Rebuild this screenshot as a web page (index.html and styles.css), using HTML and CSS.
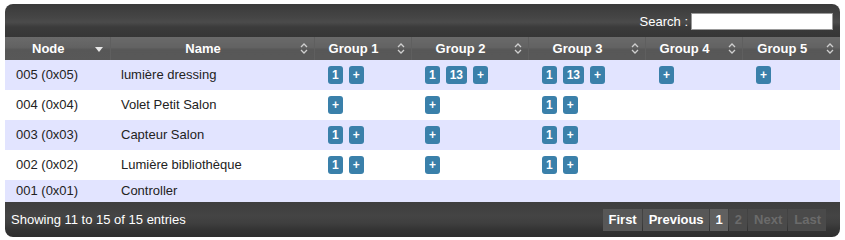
FILE: index.html
```html
<!DOCTYPE html>
<html lang="fr">
<head>
    <meta charset="UTF-8">
    <title>Nodes</title>
    <link rel="stylesheet" href="styles.css">
</head>
<body>

    <div class="table-wrapper">
        <div class="toolbar">
            <label class="search">Search :<input type="text"></label>
        </div>

        <table class="nodes">
            <colgroup>
                <col style="width:105px">
                <col style="width:204px">
                <col style="width:97px">
                <col style="width:117px">
                <col style="width:117px">
                <col style="width:97px">
                <col style="width:98px">
            </colgroup>
            <thead>
                <tr>
                    <th class="sort-desc">Node <span class="icon"><svg width="8" height="5" viewBox="0 0 8 5"><path d="M0 0h8L4 5z" fill="#e8e8e8"/></svg></span></th>
                    <th>Name <span class="icon"><svg width="8" height="11" viewBox="0 0 8 11"><path d="M1 4l3-3 3 3M1 7l3 3 3-3" fill="none" stroke="#cfcfcf" stroke-width="1.3"/></svg></span></th>
                    <th>Group 1 <span class="icon"><svg width="8" height="11" viewBox="0 0 8 11"><path d="M1 4l3-3 3 3M1 7l3 3 3-3" fill="none" stroke="#cfcfcf" stroke-width="1.3"/></svg></span></th>
                    <th>Group 2 <span class="icon"><svg width="8" height="11" viewBox="0 0 8 11"><path d="M1 4l3-3 3 3M1 7l3 3 3-3" fill="none" stroke="#cfcfcf" stroke-width="1.3"/></svg></span></th>
                    <th>Group 3 <span class="icon"><svg width="8" height="11" viewBox="0 0 8 11"><path d="M1 4l3-3 3 3M1 7l3 3 3-3" fill="none" stroke="#cfcfcf" stroke-width="1.3"/></svg></span></th>
                    <th>Group 4 <span class="icon"><svg width="8" height="11" viewBox="0 0 8 11"><path d="M1 4l3-3 3 3M1 7l3 3 3-3" fill="none" stroke="#cfcfcf" stroke-width="1.3"/></svg></span></th>
                    <th>Group 5 <span class="icon"><svg width="8" height="11" viewBox="0 0 8 11"><path d="M1 4l3-3 3 3M1 7l3 3 3-3" fill="none" stroke="#cfcfcf" stroke-width="1.3"/></svg></span></th>
                </tr>
            </thead>
            <tbody>
                <tr class="odd">
                    <td>005 (0x05)</td>
                    <td>lumière dressing</td>
                    <td class="grp"><div class="badges"><span class="badge">1</span><span class="badge">+</span></div></td>
                    <td class="grp"><div class="badges"><span class="badge">1</span><span class="badge">13</span><span class="badge">+</span></div></td>
                    <td class="grp"><div class="badges"><span class="badge">1</span><span class="badge">13</span><span class="badge">+</span></div></td>
                    <td class="grp"><div class="badges"><span class="badge">+</span></div></td>
                    <td class="grp"><div class="badges"><span class="badge">+</span></div></td>
                </tr>
                <tr class="even">
                    <td>004 (0x04)</td>
                    <td>Volet Petit Salon</td>
                    <td class="grp"><div class="badges"><span class="badge">+</span></div></td>
                    <td class="grp"><div class="badges"><span class="badge">+</span></div></td>
                    <td class="grp"><div class="badges"><span class="badge">1</span><span class="badge">+</span></div></td>
                    <td class="grp"></td>
                    <td class="grp"></td>
                </tr>
                <tr class="odd">
                    <td>003 (0x03)</td>
                    <td>Capteur Salon</td>
                    <td class="grp"><div class="badges"><span class="badge">1</span><span class="badge">+</span></div></td>
                    <td class="grp"><div class="badges"><span class="badge">+</span></div></td>
                    <td class="grp"><div class="badges"><span class="badge">1</span><span class="badge">+</span></div></td>
                    <td class="grp"></td>
                    <td class="grp"></td>
                </tr>
                <tr class="even">
                    <td>002 (0x02)</td>
                    <td>Lumière bibliothèque</td>
                    <td class="grp"><div class="badges"><span class="badge">1</span><span class="badge">+</span></div></td>
                    <td class="grp"><div class="badges"><span class="badge">+</span></div></td>
                    <td class="grp"><div class="badges"><span class="badge">1</span><span class="badge">+</span></div></td>
                    <td class="grp"></td>
                    <td class="grp"></td>
                </tr>
                <tr class="odd">
                    <td>001 (0x01)</td>
                    <td>Controller</td>
                    <td class="grp"></td>
                    <td class="grp"></td>
                    <td class="grp"></td>
                    <td class="grp"></td>
                    <td class="grp"></td>
                </tr>
            </tbody>
        </table>

        <div class="footer">
            <div class="info">Showing 11 to 15 of 15 entries</div>
            <div class="paging">
                <span class="page-btn">First</span>
                <span class="page-btn">Previous</span>
                <span class="page-btn current">1</span>
                <span class="page-btn disabled">2</span>
                <span class="page-btn disabled">Next</span>
                <span class="page-btn disabled">Last</span>
            </div>
        </div>
    </div>

</body>
</html>
```

FILE: styles.css
```css
body {
    margin: 0;
    padding: 4px 5px;
    background-color: #ffffff;
    font-family: "Liberation Sans", Arial, sans-serif;
    font-size: 13px;
    color: #222;
}
.table-wrapper {
    width: 835px;
}
.toolbar {
    height: 33px;
    display: flex;
    align-items: center;
    justify-content: flex-end;
    padding-right: 7px;
    border-radius: 8px 8px 0 0;
    background: linear-gradient(to bottom, #3a3a3a 0%, #454545 40%, #4b4b4b 55%, #3b3b3b 70%, #363636 100%);
}
.search {
    color: #ffffff;
    font-size: 13px;
    display: flex;
    align-items: center;
    margin-top: 1px;
}
.search input {
    width: 142px;
    height: 17px;
    box-sizing: border-box;
    margin-left: 3px;
    border: 1px solid #999;
    background-color: #fff;
    padding: 0 2px;
}
.nodes {
    width: 835px;
    table-layout: fixed;
    border-collapse: collapse;
}
.nodes th {
    position: relative;
    height: 23px;
    padding: 0 18px 0 0;
    color: #ffffff;
    font-weight: bold;
    font-size: 13px;
    text-align: center;
    background: linear-gradient(to bottom, #6a6a6a 0%, #626262 45%, #575757 55%, #585858 100%);
    border-left: 1px solid #5f5f5f;
    box-sizing: border-box;
}
.nodes th:first-child {
    border-left: none;
}
.nodes th .icon {
    position: absolute;
    right: 6px;
    top: 6px;
    width: 8px;
    height: 11px;
    line-height: 0;
}
.nodes th.sort-desc .icon {
    top: 10px;
    right: 7px;
}
.nodes td {
    padding: 3px 0 3px 11px;
    line-height: 16px;
    vertical-align: middle;
    white-space: nowrap;
}
.nodes td.grp {
    padding-left: 14px;
}
.odd {
    background-color: #e2e4ff;
}
.even {
    background-color: #ffffff;
}
.badges {
    display: flex;
    gap: 6px;
    padding: 3px 0;
}
.badge {
    display: inline-block;
    height: 18px;
    line-height: 18px;
    padding: 0 4px;
    border-radius: 3px;
    background-color: #3a80aa;
    color: #ffffff;
    font-weight: bold;
    font-size: 12px;
    text-align: center;
}
.footer {
    height: 35px;
    display: flex;
    align-items: center;
    justify-content: space-between;
    padding: 0 14px 0 6px;
    border-radius: 0 0 8px 8px;
    background: linear-gradient(to bottom, #3e3e3e 0%, #444444 40%, #3f3f3f 60%, #333333 80%, #2e2e2e 100%);
    color: #ffffff;
}
.info {
    font-size: 13px;
}
.paging {
    display: flex;
    gap: 1px;
}
.page-btn {
    height: 22px;
    line-height: 22px;
    padding: 0 5px 0 6px;
    font-weight: bold;
    font-size: 13px;
    color: #ffffff;
    background-color: #575757;
}
.page-btn.current {
    background-color: #606060;
}
.page-btn.disabled {
    background-color: #4a4a4a;
    color: #6b6b6b;
}
```
